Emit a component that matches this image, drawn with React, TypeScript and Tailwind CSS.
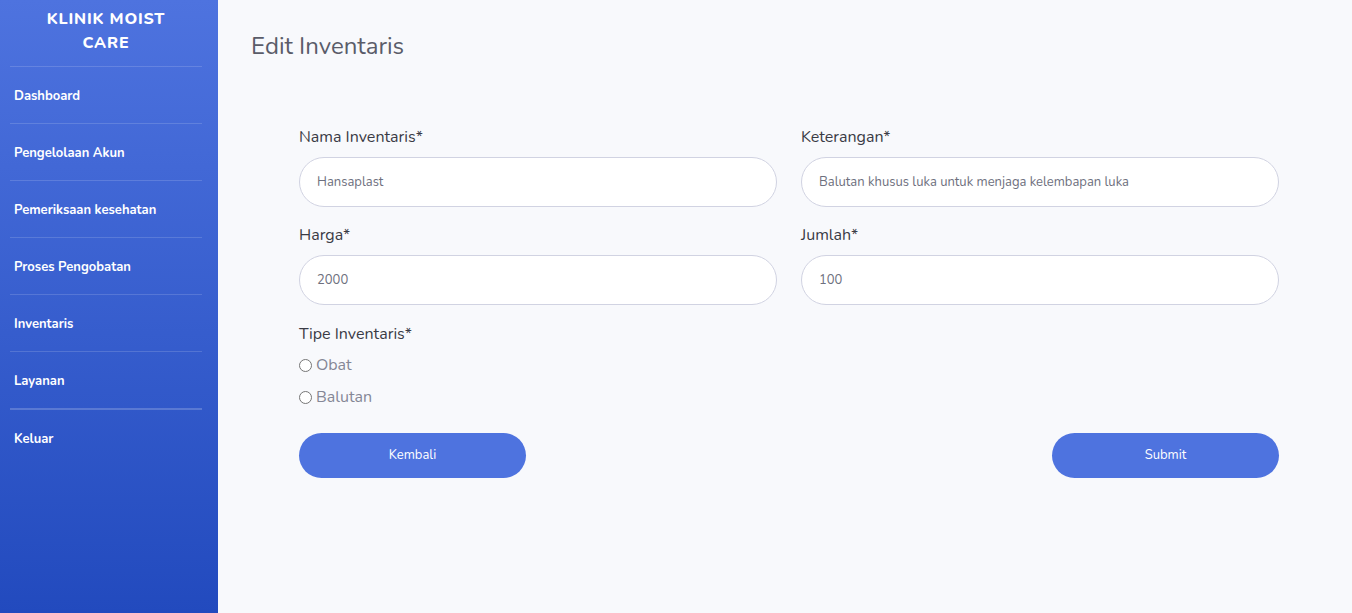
import React from "react";

const menu = [
  "Dashboard",
  "Pengelolaan Akun",
  "Pemeriksaan kesehatan",
  "Proses Pengobatan",
  "Inventaris",
  "Layanan",
];

function Sidebar() {
  return (
    <aside className="w-[218px] shrink-0 min-h-screen bg-gradient-to-b from-[#4e73df] to-[#224abe] text-white">
      <div className="h-[66px] pb-[4px] pr-[6px] flex items-center justify-center text-center font-extrabold text-[16px] leading-[24px] tracking-[0.05em] uppercase">
        Klinik Moist
        <br />
        Care
      </div>
      {menu.map((item) => (
        <div key={item}>
          <hr className="ml-[10px] mr-[16px] border-0 border-t border-white/15" />
          <div className="h-[56px] pt-[4px] flex items-center px-[14px] text-[13px] font-bold">{item}</div>
        </div>
      ))}
      <hr className="ml-[10px] mr-[16px] border-0 border-t-2 border-white/20" />
      <div className="h-[58px] pt-[2px] flex items-center px-[14px] text-[13px] font-bold">Keluar</div>
    </aside>
  );
}

function Field({ label, value }: { label: string; value: string }) {
  return (
    <div className="flex flex-col">
      <label className="text-[16px] leading-[24px] text-[#3a3b45] mb-[8px]">{label}</label>
      <input
        readOnly
        value={value}
        className="h-[50px] rounded-full border border-[#d1d3e2] bg-white px-[17px] text-[13px] text-[#6e707e] outline-none"
      />
    </div>
  );
}

function Radio({ label }: { label: string }) {
  return (
    <label className="flex items-center gap-[4px] h-[32px] text-[16px] text-[#858796]">
      <span className="w-[13px] h-[13px] rounded-full border border-[#767676] bg-white" />
      {label}
    </label>
  );
}

export default function App() {
  return (
    <div className="flex min-h-screen bg-[#f8f9fc] font-['Nunito','Lato',sans-serif]">
      <Sidebar />
      <main className="flex-1 px-[33px] pt-[28px]">
        <h1 className="text-[24px] leading-[36px] text-[#5a5c69] mb-[61px]">Edit Inventaris</h1>
        <div className="pl-[48px] pr-[40px]">
          <div className="grid grid-cols-2 gap-x-[24px] gap-y-[16px]">
            <Field label="Nama Inventaris*" value="Hansaplast" />
            <Field label="Keterangan*" value="Balutan khusus luka untuk menjaga kelembapan luka" />
            <Field label="Harga*" value="2000" />
            <Field label="Jumlah*" value="100" />
          </div>
          <div className="mt-[17px] text-[16px] leading-[24px] text-[#3a3b45]">Tipe Inventaris*</div>
          <div className="mt-[3px] flex flex-col">
            <Radio label="Obat" />
            <Radio label="Balutan" />
          </div>
          <div className="mt-[20px] flex justify-between">
            <button className="w-[227px] h-[45px] rounded-full bg-[#4e73df] text-white text-[13px]">Kembali</button>
            <button className="w-[227px] h-[45px] rounded-full bg-[#4e73df] text-white text-[13px]">Submit</button>
          </div>
        </div>
      </main>
    </div>
  );
}
